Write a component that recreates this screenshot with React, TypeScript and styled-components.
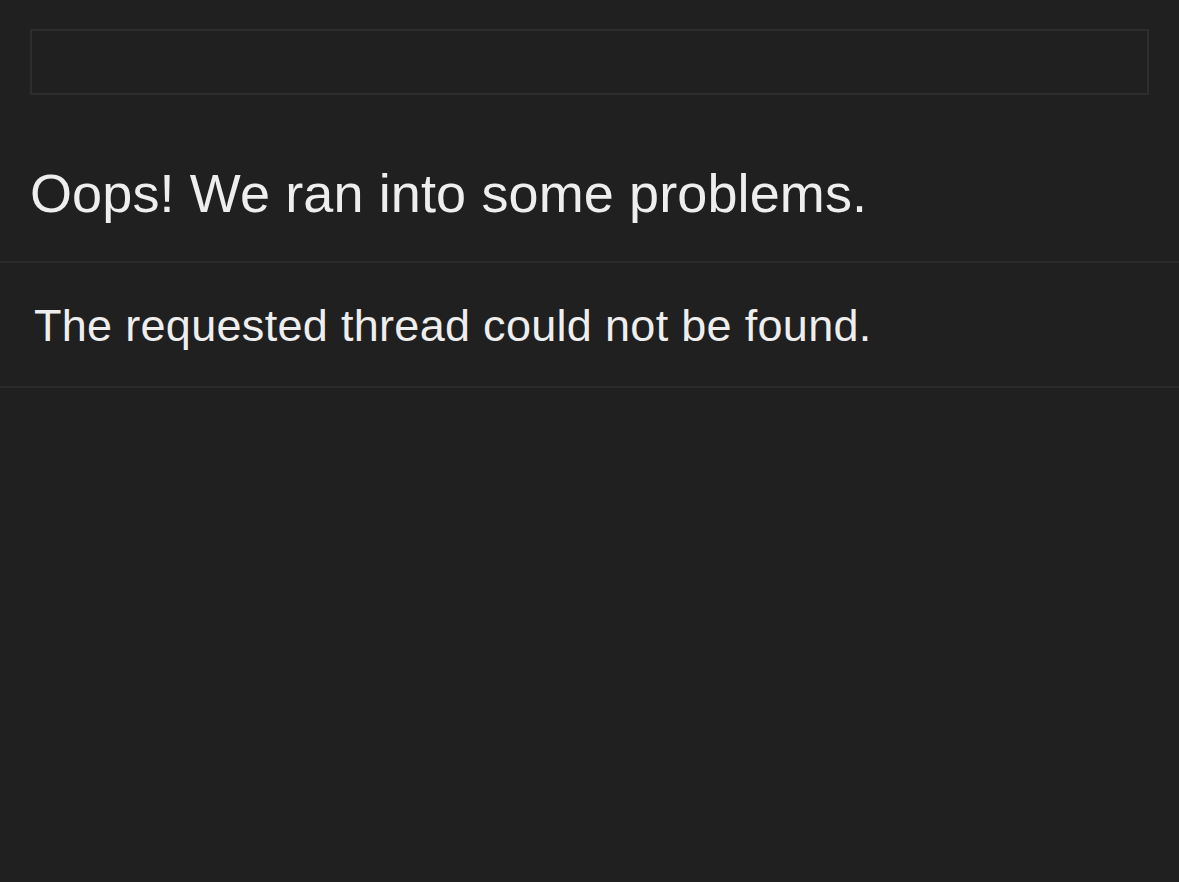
import React from 'react';
import styled, { createGlobalStyle } from 'styled-components';

const GlobalStyle = createGlobalStyle`
  html, body {
    margin: 0;
    padding: 0;
    background-color: #202020;
  }
  body {
    font-family: "Liberation Sans", Arial, Helvetica, sans-serif;
    color: #eeeeee;
  }
`;

const Page = styled.div`
  min-height: 882px;
  background-color: #202020;
  display: flex;
  flex-direction: column;
`;

const SearchBar = styled.div`
  margin: 29px 30px 0 30px;
  height: 62px;
  border: 2px solid #2d2d2d;
  background-color: #202020;
`;

const Title = styled.h1`
  margin: 0;
  padding: 67px 30px 37px 30px;
  font-size: 54px;
  line-height: 62px;
  font-weight: 400;
  letter-spacing: 0.12px;
  color: #eeeeee;
  border-bottom: 2px solid #2b2b2b;
`;

const Message = styled.p`
  margin: 0;
  padding: 37px 34px 34px 34px;
  font-size: 45px;
  line-height: 52px;
  letter-spacing: 0.3px;
  color: #eeeeee;
  border-bottom: 2px solid #2b2b2b;
`;

function App() {
  return (
    <>
      <GlobalStyle />
      <Page>
        <SearchBar />
        <Title>Oops! We ran into some problems.</Title>
        <Message>The requested thread could not be found.</Message>
      </Page>
    </>
  );
}

export default App;
